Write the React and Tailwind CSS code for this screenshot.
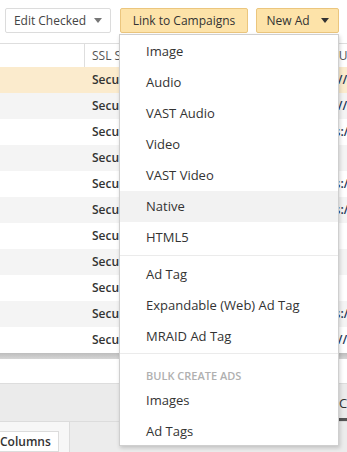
import React from 'react';

const rows = [
  { bg: 'bg-[#fbebcd]', url: 'http://ads.adnet.com/img/1' },
  { bg: 'bg-[#f4f4f4]', url: 'http://ads.adnet.com/img/2' },
  { bg: 'bg-white', url: 'https://cdn.adnet.com/a/3' },
  { bg: 'bg-[#f4f4f4]', url: '' },
  { bg: 'bg-white', url: 'https://cdn.adnet.com/a/5' },
  { bg: 'bg-[#f4f4f4]', url: 'https://cdn.adnet.com/a/6' },
  { bg: 'bg-white', url: '' },
  { bg: 'bg-[#f4f4f4]', url: '' },
  { bg: 'bg-white', url: '' },
  { bg: 'bg-[#f4f4f4]', url: 'https://cdn.adnet.com/a/10' },
  { bg: 'bg-white', url: 'http://ads.adnet.com/img/11' },
];

const menuTop = ['Image', 'Audio', 'VAST Audio', 'Video', 'VAST Video', 'Native', 'HTML5'];
const menuTags = ['Ad Tag', 'Expandable (Web) Ad Tag', 'MRAID Ad Tag'];

function Caret({ className }) {
  return (
    <svg width="8" height="5" viewBox="0 0 8 5" className={className}>
      <path d="M0 0h8L4 5z" fill="currentColor" />
    </svg>
  );
}

function MenuItem({ label, active }) {
  return (
    <div className={`h-[31px] flex items-center pl-[26px] text-[13px] text-[#333] ${active ? 'bg-[#f2f2f2]' : ''}`}>
      {label}
    </div>
  );
}

export default function App() {
  return (
    <div className="relative w-[347px] h-[452px] overflow-hidden bg-white font-['Open_Sans',sans-serif]">
      {/* Toolbar */}
      <div className="h-[43px] flex items-start pt-[8px] pl-[5px]">
        <button className="w-[106px] h-[25px] flex items-center justify-center gap-[8px] bg-white border border-[#dcdcdc] rounded-[2px] text-[12px] text-[#444]">
          Edit Checked
          <Caret className="text-[#777]" />
        </button>
        <button className="ml-[9px] w-[128px] h-[25px] flex items-center justify-center bg-[#fde3a9] border border-[#ebc67e] rounded-[2px] text-[12px] text-[#333]">
          Link to Campaigns
        </button>
        <button className="ml-[8px] w-[83px] h-[25px] flex items-center justify-center gap-[11px] bg-[#fde3a9] border border-[#ebc67e] rounded-[2px] text-[12px] text-[#333]">
          New Ad
          <Caret className="text-[#333]" />
        </button>
      </div>

      {/* Table */}
      <div className="w-[520px]">
        <div className="h-[24px] flex border-t border-[#dedede] bg-white text-[12px] text-[#555]">
          <div className="w-[85px] border-r border-[#dedede]" />
          <div className="w-[222px] pl-[7px] flex items-center border-r border-[#dedede]">SSL Support</div>
          <div className="flex-1 pl-[3px] flex items-center">Click URL</div>
        </div>
        {rows.map((r, i) => (
          <div key={i} className={`h-[26px] flex items-center text-[12px] ${r.bg}`}>
            <div className="w-[85px]" />
            <div className="w-[222px] pl-[7px] font-semibold text-[#333]">Secure</div>
            <div className="flex-1 pl-[3px] font-semibold text-[#1d3556] whitespace-nowrap">{r.url}</div>
          </div>
        ))}
        <div className="h-[6px] bg-gradient-to-b from-[#bdbdbd] to-[#d6d6d6]" />
      </div>

      <div className="h-[25px] bg-white border-b border-[#dddddd]" />
      <div className="h-[38px] flex justify-end bg-[#ebebeb] border-b border-[#dcdcdc]">
        <div className="w-[8px] flex flex-col items-start justify-end overflow-visible">
          <div className="pb-[5px] text-[13px] text-[#333] whitespace-nowrap">Creatives</div>
          <div className="w-[8px] h-[3px] bg-[#555]" />
        </div>
      </div>
      <div className="h-[30px] flex">
        <div className="w-[70px] pt-[9px] bg-[#f7f7f7] border-r border-[#dcdcdc]">
          <div className="w-[59px] h-[21px] bg-white border border-l-0 border-[#dcdcdc] text-[12px] font-semibold text-[#333] flex items-center">
            Columns
          </div>
        </div>
        <div className="flex-1 bg-[#ececec]" />
      </div>

      {/* Dropdown menu */}
      <div className="absolute left-[119px] top-[34px] w-[220px] h-[412px] bg-white border border-[#cfcfcf] shadow-[1px_2px_4px_rgba(0,0,0,0.18)] pt-[1px]">
        {menuTop.map((m) => (
          <MenuItem key={m} label={m} active={m === 'Native'} />
        ))}
        <div className="mt-[2px] mb-[3px] h-px bg-[#ebebeb]" />
        {menuTags.map((m) => (
          <MenuItem key={m} label={m} />
        ))}
        <div className="mt-[1px] h-px bg-[#ebebeb]" />
        <div className="h-[31px] pl-[26px] pt-[16px] text-[11px] leading-[11px] font-semibold text-[#b0b0b0]">
          BULK CREATE ADS
        </div>
        <MenuItem label="Images" />
        <MenuItem label="Ad Tags" />
      </div>
    </div>
  );
}
